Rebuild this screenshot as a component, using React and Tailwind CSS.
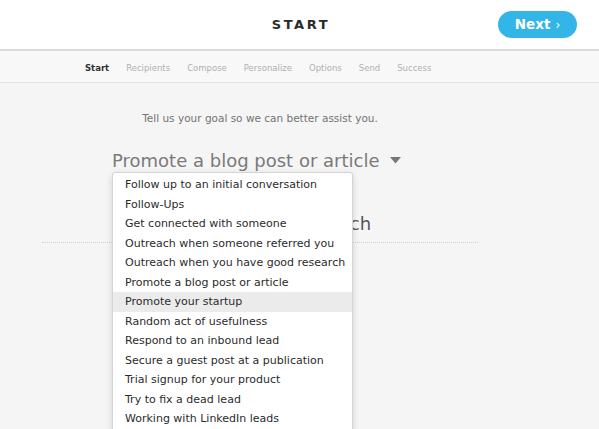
import { useState } from 'react';

const opciones = [
  'Follow up to an initial conversation',
  'Follow-Ups',
  'Get connected with someone',
  'Outreach when someone referred you',
  'Outreach when you have good research',
  'Promote a blog post or article',
  'Promote your startup',
  'Random act of usefulness',
  'Respond to an inbound lead',
  'Secure a guest post at a publication',
  'Trial signup for your product',
  'Try to fix a dead lead',
  'Working with LinkedIn leads',
];

const pasos = ['Start', 'Recipients', 'Compose', 'Personalize', 'Options', 'Send', 'Success'];

function App() {
  const [activo, setActivo] = useState('Promote your startup');

  return (
    <div className="min-h-[429px] h-[429px] overflow-hidden bg-[#f5f5f5] text-[#333]" style={{ fontFamily: '"DejaVu Sans", "Open Sans", sans-serif' }}>
      <header className="h-[51px] bg-white border-b-2 border-[#dcdcdc] grid grid-cols-[1fr_auto_1fr] items-center">
        <div />
        <h1 className="text-[13px] font-bold tracking-[0.2em] text-[#2a2a2a] pl-[3px]">START</h1>
        <div className="flex justify-end pr-[22px]">
          <button className="h-[27px] w-[79px] rounded-full bg-[#34b5e8] text-white text-[13.5px] font-bold flex items-center justify-center gap-[5px]">
            Next <span className="text-[12px] font-normal">›</span>
          </button>
        </div>
      </header>

      <nav className="h-[32px] pt-[3px] bg-[#f8f8f8] border-b border-[#e4e4e4] flex items-center gap-[17px] pl-[85px] text-[8.5px]">
        {pasos.map(p => (
          <span key={p} className={p === 'Start' ? 'font-bold text-[#333]' : 'text-[#b0b0b0]'}>{p}</span>
        ))}
      </nav>

      <main className="relative ml-[42px] w-[436px]">
        <p className="pt-[28px] text-center text-[10.5px] text-[#737373]">
          Tell us your goal so we can better assist you.
        </p>

        <div className="mt-[20px] pl-[70px] flex items-center gap-[10px] text-[18px] text-[#7a7a7a]">
          <span>Promote a blog post or article</span>
          <svg width="11" height="7" viewBox="0 0 11 7"><path d="M0 0h11L5.5 6.5z" fill="#777" /></svg>
        </div>

        <div className="mt-[36px] pl-[75px] text-[18px] text-[#555]">
          Influencer or press outreach
        </div>
        <div className="mt-[5px] border-t border-dotted border-[#cfcfcf]" />

        <ul className="absolute left-[70px] top-[89px] w-[241px] bg-white border border-[#d4d4d4] rounded-t-[3px] shadow-[0_2px_6px_rgba(0,0,0,0.15)] pt-[2px] pb-[6px] text-[11px] text-[#2b2b2b]">
          {opciones.map(op => (
            <li
              key={op}
              onMouseEnter={() => setActivo(op)}
              className={`h-[19.5px] leading-[19.5px] px-[12px] whitespace-nowrap ${activo === op ? 'bg-[#ebebeb]' : ''}`}
            >
              {op}
            </li>
          ))}
        </ul>
      </main>
    </div>
  );
}

export default App;
